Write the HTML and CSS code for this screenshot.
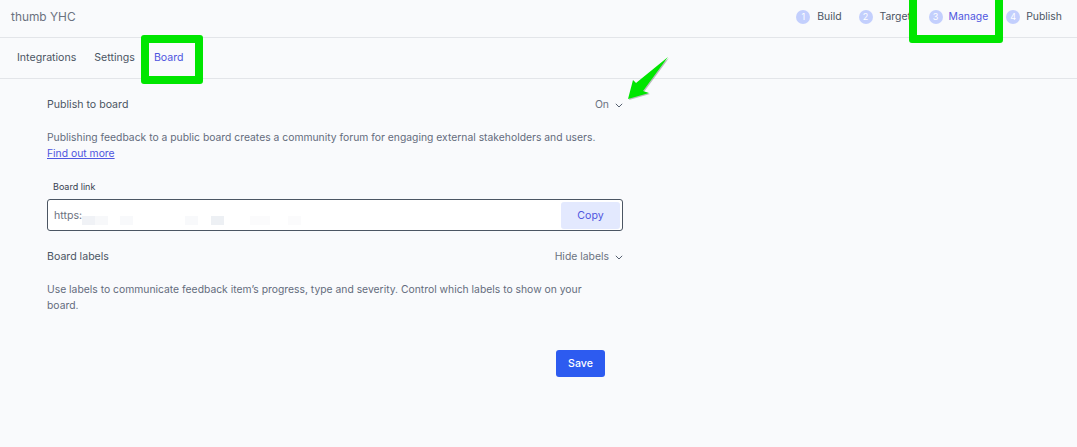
FILE: index.html
```html
<!DOCTYPE html>
<html lang="en">
<head>
<meta charset="utf-8">
<title>Board</title>
<link rel="stylesheet" href="styles.css">
</head>
<body>
<header class="topbar">
  <div class="brand">thumb YHC</div>
  <ol class="steps">
    <li class="step step-build"><span class="num">1</span>Build</li>
    <li class="step step-target"><span class="num">2</span><span class="clip">Target</span></li>
    <li class="step step-manage active"><span class="num">3</span>Manage</li>
    <li class="step step-publish"><span class="num">4</span>Publish</li>
  </ol>
</header>
<nav class="tabs">
  <a class="tab">Integrations</a>
  <a class="tab">Settings</a>
  <a class="tab active">Board</a>
</nav>
<main class="panel">
  <div class="row">
    <span class="label">Publish to board</span>
    <span class="select">On
      <svg class="chev" viewBox="0 0 8 5"><path d="M.8.8 4 4l3.2-3.2" /></svg>
    </span>
  </div>
  <p class="desc first">Publishing feedback to a public board creates a community forum for engaging external stakeholders and users.<br><a class="link">Find out more</a></p>
  <label class="field-label">Board link</label>
  <div class="field">
    <span class="url">https:</span>
    <span class="smudges">
      <i class="s s1"></i><i class="s s2"></i><i class="s s3"></i><i class="s s4"></i><i class="s s5"></i><i class="s s6"></i><i class="s s7"></i>
    </span>
    <button class="copy">Copy</button>
  </div>
  <div class="row labels-row">
    <span class="label">Board labels</span>
    <span class="select">Hide labels
      <svg class="chev" viewBox="0 0 8 5"><path d="M.8.8 4 4l3.2-3.2" /></svg>
    </span>
  </div>
  <p class="desc second">Use labels to communicate feedback item’s progress, type and severity. Control which labels to show on your board.</p>
  <div class="actions"><button class="save">Save</button></div>
</main>
<div class="mark mark-step"></div>
<div class="mark mark-tab"></div>
<svg class="arrow" viewBox="0 0 42 44" width="42" height="44">
  <path class="arrow-shadow" d="M41 2 9 28l-3-3-5 19 21-6-6-2L41 2Z"/>
  <path class="arrow-fill" d="M40 1 8 27l-3-3L0 43l21-6-6-2L40 1Z"/>
</svg>
</body>
</html>
```
FILE: styles.css
```css
* { box-sizing: border-box; }
html, body { height: 100%; }
body {
  margin: 0;
  position: relative;
  overflow: hidden;
  background: #f9fafc;
  color: #4b5563;
  font-family: Inter, "Liberation Sans", sans-serif;
  font-size: 10.6px;
  line-height: 16px;
}
.topbar {
  height: 38px;
  border-bottom: 1px solid #e3e5e9;
  display: flex;
  align-items: center;
  justify-content: space-between;
  padding: 0 15px 4px 11px;
}
.brand { font-size: 11.9px; color: #6b7280; }
.steps {
  list-style: none;
  margin: 0;
  padding: 0;
  display: flex;
  font-size: 10.4px;
}
.step { display: flex; align-items: center; gap: 6px; color: #4b5563; }
.step-build { gap: 7px; margin-right: 17px; }
.step-target { gap: 7px; width: 52px; margin-right: 18px; overflow: hidden; }
.step-manage { margin-right: 18px; }
.step.active { color: #4f56e0; }
.num {
  width: 14px;
  height: 14px;
  border-radius: 50%;
  background: #c3cffd;
  color: #fff;
  font-size: 9px;
  line-height: 14px;
  text-align: center;
  flex: none;
}
.tabs {
  height: 41px;
  border-bottom: 1px solid #e3e5e9;
  display: flex;
  align-items: center;
  gap: 18px;
  padding: 0 0 1px 17px;
}
.tab { color: #4b5563; }
.tab.active { color: #4f56e0; margin-left: 1px; }
.panel {
  width: 576px;
  margin-left: 47px;
}
.row {
  display: flex;
  justify-content: space-between;
  align-items: center;
  padding-top: 19px;
  height: 33px;
}
.select { display: flex; align-items: center; gap: 6px; color: #6b7280; font-size: 10.4px; }
.chev { width: 8px; height: 5px; fill: none; stroke: #566070; stroke-width: 1; }
.desc { margin: 0; color: #646c7c; font-size: 10.35px; line-height: 16px; }
.desc.first { margin-top: 17px; }
.link { color: #4f56e0; text-decoration: underline; }
.field-label {
  display: block;
  margin: 19px 0 0 6px;
  font-size: 9px;
  line-height: 14px;
  color: #374151;
}
.field {
  position: relative;
  margin-top: 5px;
  height: 32px;
  background: #fff;
  border: 1px solid #4b5563;
  border-radius: 3px;
  display: flex;
  align-items: center;
  justify-content: space-between;
  padding: 2px 2px 1px 6px;
}
.url { color: #6b7280; }
.smudges { position: absolute; inset: 0; pointer-events: none; }
.s { position: absolute; height: 9px; top: 16px; width: 13px; background: #f8f9fb; }
.s1 { left: 34px; background: #f0f2f6; }
.s2 { left: 47px; background: #f7f8fa; }
.s3 { left: 72px; }
.s4 { left: 137px; }
.s5 { left: 163px; background: #edf0f4; }
.s6 { left: 202px; width: 20px; background: #fbfbfc; }
.s7 { left: 240px; background: #fbfbfc; }
.copy {
  width: 59px;
  height: 27px;
  border: 0;
  border-radius: 3px;
  background: #e3e9fe;
  color: #4f56e0;
  font: inherit;
}
.labels-row { padding-top: 0; height: 16px; margin-top: 18px; }
.desc.second { margin-top: 16px; width: 540px; }
.actions { display: flex; justify-content: flex-end; padding-right: 18px; margin-top: 37px; }
.save {
  width: 49px;
  height: 27px;
  border: 0;
  border-radius: 3px;
  background: #2d5bf0;
  color: #fff;
  font: 500 10.6px/16px Inter, "Liberation Sans", sans-serif;
}
.mark {
  position: absolute;
  border: 8px solid #00e600;
  border-radius: 3px;
}
.mark-step { left: 909px; top: -8px; width: 94px; height: 51px; }
.mark-tab { left: 141px; top: 35px; width: 62px; height: 49px; }
.arrow { position: absolute; left: 628px; top: 56px; }
.arrow-fill { fill: #00e600; }
.arrow-shadow { fill: #000; opacity: .25; }
```
